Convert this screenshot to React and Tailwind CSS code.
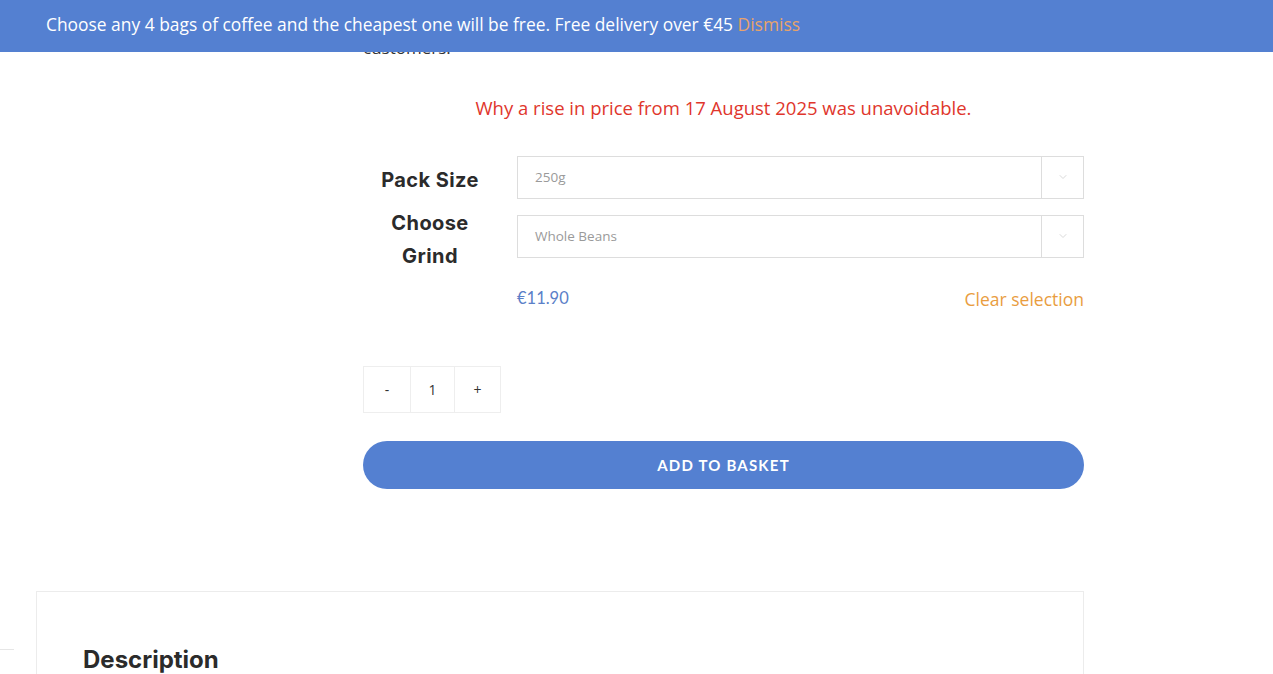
import { ChevronDown } from 'lucide-react';

export default function App() {
  return (
    <div className="relative h-[674px] overflow-hidden bg-white font-['Open_Sans',sans-serif]">
      {/* announcement bar, sits over the scrolled page */}
      <div className="absolute inset-x-0 top-0 z-10 flex h-[52px] items-center bg-[#5480d1] pb-[3px] pl-[46px] text-[17.4px] text-white">
        <span>
          Choose any 4 bags of coffee and the cheapest one will be free. Free delivery over €45{' '}
          <span className="text-[#e9a36a]">Dismiss</span>
        </span>
      </div>

      <div className="ml-[363px] w-[721px] pt-[36px]">
        <p className="text-[17px] leading-6 text-[#333]">customers.</p>

        <p className="mt-[34px] text-center text-[18.5px] text-[#e0362c]">
          Why a rise in price from 17 August 2025 was unavoidable.
        </p>

        {/* variations */}
        <div className="mt-[34px] grid grid-cols-[134px_1fr] gap-x-[20px] gap-y-[16px]">
          <div className="flex h-[42px] items-center justify-center pt-[6px] font-['Inter',sans-serif] text-[20px] font-bold tracking-[0.02em] text-[#2b2b2b]">
            Pack Size
          </div>
          <Select value="250g" />
          <div className="-mt-[8px] text-center font-['Inter',sans-serif] text-[20px] font-bold leading-[33px] tracking-[0.02em] text-[#2b2b2b]">
            Choose
            <br />
            Grind
          </div>
          <Select value="Whole Beans" />
        </div>

        <div className="mt-[13px] ml-[154px] flex items-start justify-between">
          <span className="font-['Lato',sans-serif] text-[16.5px] text-[#5b80c8]">€11.90</span>
          <span className="text-[17.5px] text-[#e99d3f]">Clear selection</span>
        </div>

        {/* quantity */}
        <div className="mt-[54px] flex h-[47px] w-[138px] border border-[#eeeeee] text-[14px] text-[#333]">
          <div className="flex w-[47px] items-center justify-center border-r border-[#eeeeee]">-</div>
          <div className="flex w-[44px] items-center justify-center border-r border-[#eeeeee]">1</div>
          <div className="flex flex-1 items-center justify-center">+</div>
        </div>

        <button className="mt-[28px] flex h-[48px] w-full items-center justify-center rounded-full bg-[#5480d1] font-['Lato',sans-serif] text-[15px] font-bold tracking-[0.08em] text-white">
          ADD TO BASKET
        </button>
      </div>

      <div className="mt-[102px] flex items-start">
        <div className="mt-[58px] h-px w-[14px] bg-[#e6e6e6]" />
        <div className="ml-[22px] h-[200px] w-[1048px] border border-[#ececec] px-[46px] pt-[50px]">
          <h2 className="font-['Inter',sans-serif] text-[24px] font-bold text-[#2b2b2b]">Description</h2>
        </div>
      </div>
    </div>
  );
}

function Select({ value }) {
  return (
    <div className="flex h-[43px] border border-[#dddddd] text-[13.5px] text-[#9a9a9a]">
      <div className="flex flex-1 items-center pl-[17px]">{value}</div>
      <div className="flex w-[42px] items-center justify-center border-l border-[#dddddd]">
        <ChevronDown size={12} strokeWidth={1.5} className="text-[#cccccc]" />
      </div>
    </div>
  );
}
